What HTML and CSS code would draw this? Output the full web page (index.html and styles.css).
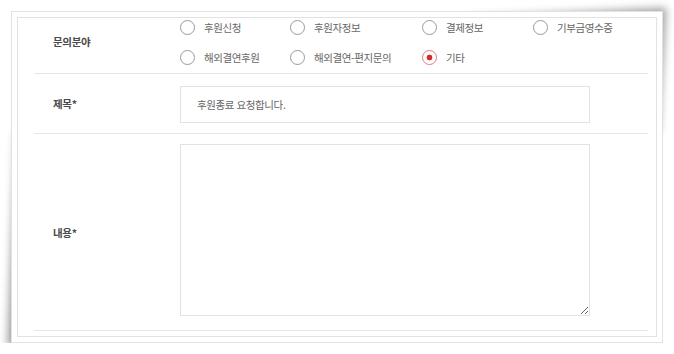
FILE: index.html
```html
<!DOCTYPE html>
<html lang="ko">
<head>
<meta charset="utf-8">
<link rel="stylesheet" href="styles.css">
</head>
<body>
<div class="sheet">
  <div class="frame">
    <div class="inner">
      <div class="row row-cat">
        <div class="label">문의분야</div>
        <div class="value">
          <div class="radios">
            <label class="radio"><input type="radio" name="cat"><span>후원신청</span></label>
            <label class="radio"><input type="radio" name="cat"><span>후원자정보</span></label>
            <label class="radio"><input type="radio" name="cat"><span>결제정보</span></label>
            <label class="radio"><input type="radio" name="cat"><span>기부금영수증</span></label>
            <label class="radio"><input type="radio" name="cat"><span>해외결연후원</span></label>
            <label class="radio"><input type="radio" name="cat"><span>해외결연-편지문의</span></label>
            <label class="radio"><input type="radio" name="cat" checked><span>기타</span></label>
          </div>
        </div>
      </div>
      <div class="row row-title">
        <div class="label">제목*</div>
        <div class="value">
          <input class="text" type="text" value="후원종료 요청합니다.">
        </div>
      </div>
      <div class="row row-body">
        <div class="label">내용*</div>
        <div class="value">
          <textarea class="area"></textarea>
        </div>
      </div>
    </div>
  </div>
</div>
</body>
</html>
```

FILE: styles.css
```css
* { box-sizing: border-box; }
html { background: #fff; }
body {
  margin: 0;
  padding: 11px 0 0 11px;
  font-family: "Noto Sans CJK KR", "Noto Sans", sans-serif;
  color: #666;
}
.sheet {
  position: relative;
  z-index: 0;
  width: 652px;
}
.sheet::before {
  content: "";
  position: absolute;
  z-index: -1;
  left: 3px;
  bottom: 3px;
  width: 330px;
  height: 215px;
  box-shadow: -6px 6px 8px rgba(0, 0, 0, 0.42);
  transform-origin: left bottom;
  transform: skew(-2.2deg, -1.6deg);
}
.sheet::after {
  content: "";
  position: absolute;
  z-index: -1;
  right: 3px;
  top: 3px;
  width: 200px;
  height: 125px;
  box-shadow: 6px -6px 8px rgba(0, 0, 0, 0.38);
  transform-origin: right top;
  transform: skew(-3.5deg, -2.8deg);
}
.frame {
  padding: 5px;
  border: 1px solid #e2e2e2;
  background: #fff;
}
.inner {
  border: 1px solid #e2e2e2;
  padding: 0 8px 5px 16px;
  background: #fff;
}
.row {
  display: flex;
  align-items: center;
  border-bottom: 1px solid #e6e6e6;
}
.label {
  width: 146px;
  flex: none;
  padding-left: 19px;
  font-size: 10.5px;
  font-weight: 700;
  color: #4a4a4a;
  letter-spacing: -0.3px;
}
.value { flex: 1; }
.row-cat { height: 56px; align-items: flex-start; }
.row-cat .label { padding-top: 16px; }
.radios {
  display: grid;
  grid-template-columns: 110px 132px 111px auto;
  row-gap: 12px;
}
.radio {
  display: flex;
  align-items: center;
  height: 18px;
  font-size: 10.5px;
  color: #666;
  letter-spacing: -0.4px;
}
.radio input {
  appearance: none;
  -webkit-appearance: none;
  width: 15px;
  height: 15px;
  margin: 0 9px 0 0;
  border: 1px solid #9a9a9a;
  border-radius: 50%;
  background: #fff;
  flex: none;
}
.radio input:checked {
  border-color: #e07a7a;
  background: radial-gradient(circle, #d42a2a 0 2.6px, #fff 3.2px);
}
.row-title { height: 60px; }
.text {
  display: block;
  width: 410px;
  height: 37px;
  margin: 2px 0 0;
  padding: 0 0 0 16px;
  border: 1px solid #e2e2e2;
  font-family: inherit;
  font-size: 10.5px;
  color: #666;
  letter-spacing: -0.4px;
  outline: none;
}
.row-body { height: 197px; }
.area {
  display: block;
  width: 410px;
  height: 172px;
  margin: 0 0 4px;
  border: 1px solid #e2e2e2;
  font-family: inherit;
  outline: none;
  resize: both;
}
```
